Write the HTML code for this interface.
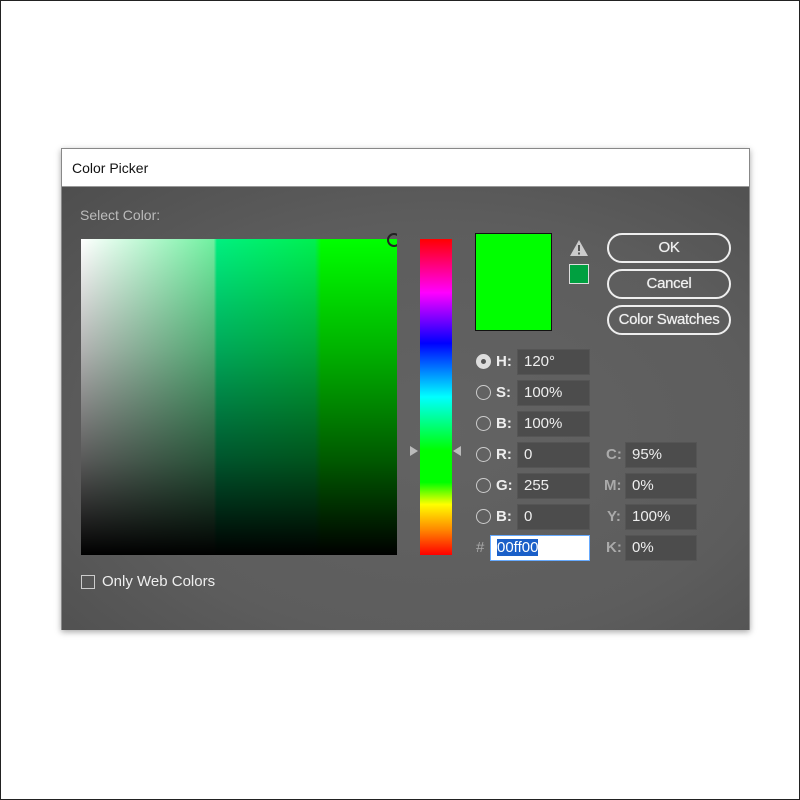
<!DOCTYPE html>
<html><head><meta charset="utf-8"><style>
*{box-sizing:border-box;margin:0;padding:0}
body{width:800px;height:800px;background:#fff;position:relative;overflow:hidden;font-family:"Liberation Sans",sans-serif;}
.frame{position:absolute;left:0;top:0;width:800px;height:800px;border:1px solid #222;}
.dlg{position:absolute;left:61px;top:148px;width:689px;height:482px;background:#5c5c5c;box-shadow:0 2px 6px rgba(0,0,0,.35);border:1px solid #888;}
.title{position:absolute;left:0;top:0;width:100%;height:38px;background:#fff;font-size:14px;color:#111;padding:11px 0 0 10px;border-bottom:1px solid #999;}
.body{position:absolute;left:0;top:38px;width:100%;height:443px;background:radial-gradient(ellipse at 55% 55%,#636363 0%,#5d5d5d 60%,#4e4e4e 100%);}
.abs{position:absolute}
.lbl{color:#ddd;font-size:14px}
.sq{left:19px;top:52px;width:316px;height:316px;background:linear-gradient(to bottom,rgba(0,0,0,0) 0%,rgba(0,0,0,.3) 35%,rgba(0,0,0,.65) 70%,#000 100%),linear-gradient(to right,#fff 0%,#70f0a0 42%,#00f080 43%,#00f050 74%,#00ff00 76%,#00ff00 100%);}
.hue{left:358px;top:52px;width:32px;height:316px;background:linear-gradient(to bottom,#f00 0%,#f0f 17%,#00f 33%,#0ff 50%,#0f0 67%,#0f0 77%,#ff0 84%,#f80 92%,#f00 100%);}
.prev{left:413px;top:46px;width:77px;height:98px;background:#00ff00;border:1px solid #111;}
.btn{left:545px;width:124px;height:30px;border:2px solid #eee;border-radius:15px;color:#f0f0f0;font-size:15px;text-align:center;line-height:26px;letter-spacing:-0.3px;text-shadow:0 0 0.6px #fff;}
.row{position:absolute;height:26px}
.radio{position:absolute;width:15px;height:15px;border:1.5px solid #ccc;border-radius:50%;top:5px}
.fld{position:absolute;height:26px;background:#4c4c4c;border:1px solid #555;color:#eee;font-size:15px;padding:3px 0 0 6px}
.rl{position:absolute;color:#eee;font-size:15px;font-weight:bold;top:4px;left:20px}
.cl{position:absolute;color:#aaa;font-size:15px;font-weight:bold;top:4px}
</style></head><body>
<div class="frame"></div>
<div class="dlg">
<div class="title">Color Picker</div>
<div class="body">
<div class="abs lbl" style="left:18px;top:20px;color:#bbb">Select Color:</div>
<div class="abs sq"></div>
<div class="abs" style="left:325px;top:46px;width:14px;height:14px;border:2px solid #222;border-radius:50%;clip-path:inset(0 4px 0 0)"></div>
<div class="abs hue"></div>
<div class="abs" style="left:348px;top:259px;width:0;height:0;border-top:5px solid transparent;border-bottom:5px solid transparent;border-left:8px solid #bbb"></div>
<div class="abs" style="left:391px;top:259px;width:0;height:0;border-top:5px solid transparent;border-bottom:5px solid transparent;border-right:8px solid #bbb"></div>
<div class="abs prev"></div>
<svg class="abs" style="left:507px;top:52px" width="20" height="18"><path d="M10 1L19 17H1Z" fill="#ccc"/><rect x="9" y="6" width="2" height="6" fill="#555"/><rect x="9" y="13.5" width="2" height="2" fill="#555"/></svg>
<div class="abs" style="left:507px;top:77px;width:20px;height:20px;background:#00a040;border:1.5px solid #ddd"></div>
<div class="abs btn" style="top:46px">OK</div>
<div class="abs btn" style="top:82px">Cancel</div>
<div class="abs btn" style="top:118px">Color Swatches</div>

<div class="row" style="left:414px;top:162px"><div class="radio" style="background:#ddd;border-color:#ddd"><div style="width:5px;height:5px;background:#555;border-radius:50%;margin:3.5px"></div></div><span class="rl">H:</span><div class="fld" style="left:41px;width:73px">120°</div></div>
<div class="row" style="left:414px;top:193px"><div class="radio"></div><span class="rl">S:</span><div class="fld" style="left:41px;width:73px">100%</div></div>
<div class="row" style="left:414px;top:224px"><div class="radio"></div><span class="rl">B:</span><div class="fld" style="left:41px;width:73px">100%</div></div>
<div class="row" style="left:414px;top:255px"><div class="radio"></div><span class="rl">R:</span><div class="fld" style="left:41px;width:73px">0</div></div>
<div class="row" style="left:414px;top:286px"><div class="radio"></div><span class="rl">G:</span><div class="fld" style="left:41px;width:73px">255</div></div>
<div class="row" style="left:414px;top:317px"><div class="radio"></div><span class="rl">B:</span><div class="fld" style="left:41px;width:73px">0</div></div>
<div class="row" style="left:414px;top:348px"><span class="abs" style="left:0;top:4px;color:#aaa;font-size:15px">#</span><div class="fld" style="left:14px;width:100px;background:#fff;border:1px solid #6af;color:#fff;padding:3px 0 0 6px"><span style="background:#1a5fc8">00ff00</span></div></div>

<div class="cl" style="left:544px;top:259px">C:</div><div class="fld" style="left:563px;top:255px;width:72px">95%</div>
<div class="cl" style="left:542px;top:290px">M:</div><div class="fld" style="left:563px;top:286px;width:72px">0%</div>
<div class="cl" style="left:545px;top:321px">Y:</div><div class="fld" style="left:563px;top:317px;width:72px">100%</div>
<div class="cl" style="left:544px;top:352px">K:</div><div class="fld" style="left:563px;top:348px;width:72px">0%</div>

<div class="abs" style="left:19px;top:388px;width:14px;height:14px;border:1.5px solid #ccc"></div>
<div class="abs" style="left:40px;top:386px;color:#eee;font-size:15px">Only Web Colors</div>
</div>
</div>
</body></html>
